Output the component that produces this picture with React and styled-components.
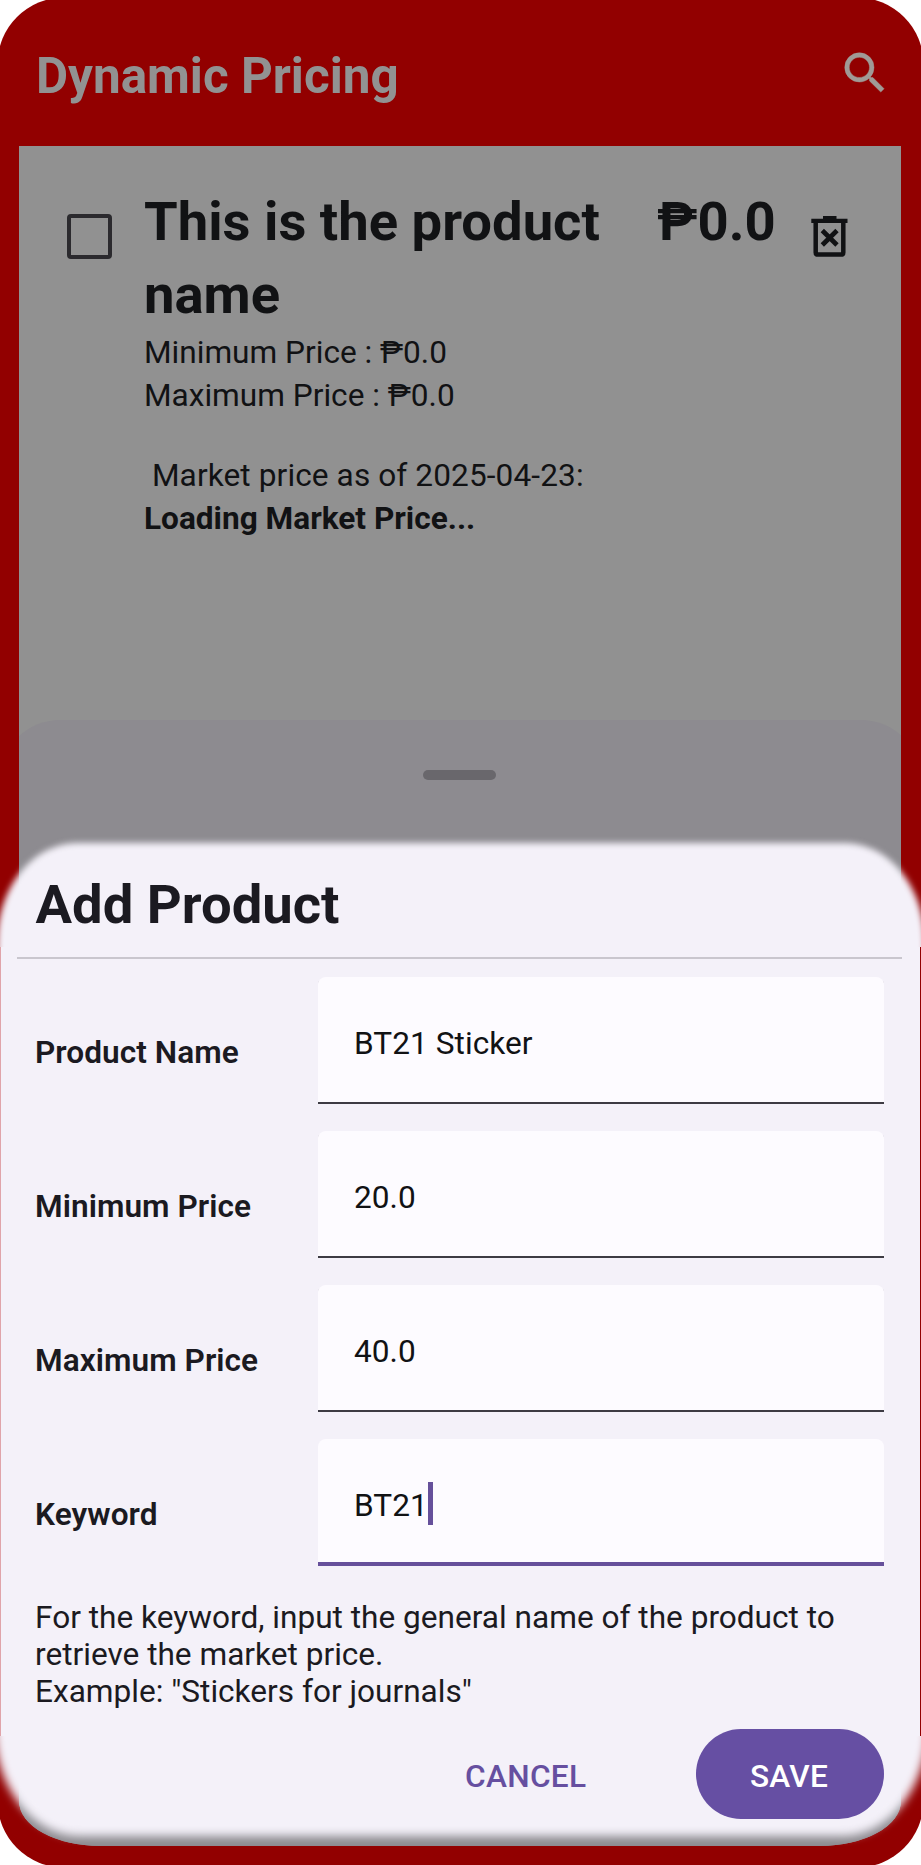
import React from "react";
import styled, { createGlobalStyle } from "styled-components";

const GlobalStyle = createGlobalStyle`
  * { box-sizing: border-box; }
  html, body { margin: 0; padding: 0; background: #ffffff; overflow: hidden; }
`;

const Screen = styled.div`
  position: relative;
  width: 921px;
  height: 1865px;
  padding: 0 20px 19px 19px;
  display: flex;
  flex-direction: column;
  overflow: hidden;
  background: #920000;
  clip-path: inset(-2.5px round 66.5px);
  font-family: Roboto, "Liberation Sans", sans-serif;
  font-size: 31.6px;
  line-height: 43px;
  letter-spacing: 0.05px;
  color: #111214;
`;

const AppBar = styled.header`
  flex: none;
  height: 146px;
  padding: 46px 9px 0 17px;
  display: flex;
  justify-content: space-between;
  align-items: flex-start;
`;

const AppTitle = styled.h1`
  margin: 0;
  font-size: 49.4px;
  line-height: 60px;
  font-weight: 700;
  letter-spacing: 0;
  color: #929292;
`;

const SearchIcon = styled.svg`
  width: 54px;
  height: 54px;
  fill: #a09a96;
  stroke: #a09a96;
  stroke-width: 0.2;
`;

const Card = styled.main`
  flex: 1;
  display: flex;
  flex-direction: column;
  justify-content: space-between;
  overflow: hidden;
  background: #919191;
  border-radius: 0 0 81px 81px / 0 0 45px 45px;
`;

const ProductRow = styled.section`
  display: flex;
  align-items: flex-start;
  padding: 39px 0 0 48px;
`;

const Checkbox = styled.div`
  flex: none;
  width: 45px;
  height: 45px;
  margin: 29px 32px 0 0;
  border: 4px solid #2b2a2e;
  border-radius: 4px;
`;

const ProductInfo = styled.div`
  flex: none;
  width: 513px;
`;

const ProductName = styled.h2`
  margin: 0;
  max-width: 470px;
  font-size: 54.4px;
  line-height: 73px;
  font-weight: 700;
  letter-spacing: 0;
`;

const Price = styled(ProductName)`
  width: 154px;
`;

const Line = styled.div`
  white-space: pre;
  font-weight: ${(p) => (p.$bold ? 700 : 400)};
  letter-spacing: ${(p) => (p.$spaced ? "0.1px" : "0")};
  margin-top: ${(p) => (p.$spaced ? "37px" : "0")};
`;

const TrashIcon = styled.svg`
  width: 37px;
  height: 41px;
  margin-top: 31px;
`;

const BackSheet = styled.div`
  height: 1126px;
  margin: 0 -20px 0 -19px;
  padding-top: 50px;
  background: #8d8b90;
  border-radius: 60px 60px 0 0;
`;

const Handle = styled.div`
  width: 73px;
  height: 10px;
  margin: 0 auto;
  border-radius: 5px;
  background: #69676c;
  transform: translateX(-1px);
`;

const Sheet = styled.section`
  position: absolute;
  left: 0;
  top: 843px;
  width: 921px;
  height: 1003px;
  padding-top: 30px;
  overflow: visible;
  color: #1b1a21;
`;

const SheetShade = styled.div`
  position: absolute;
  inset: -20px 0 0;
  overflow: hidden;

  &::before,
  &::after {
    content: "";
    position: absolute;
    background: #f4f1f9;
  }
  &::before {
    left: -3px;
    right: -4px;
    top: 20px;
    height: 700px;
    border-radius: 80px 80px 0 0 / 100px 100px 0 0;
    filter: blur(3px);
  }
  &::after {
    left: -6px;
    right: -7px;
    bottom: 10px;
    height: 500px;
    border-radius: 0 0 86px 86px / 0 0 110px 110px;
    filter: blur(5px);
  }
`;

const SheetTitle = styled.h2`
  position: relative;
  margin: 0;
  padding-left: 35.5px;
  font-size: 54.4px;
  line-height: 64px;
  font-weight: 700;
  letter-spacing: 0;
`;

const SheetBody = styled.div`
  position: relative;
  margin-top: 10px;
  height: 789px;
  padding-top: 10px;
  background: #f4f1f9;
  border-left: 1px solid #e0a4aa;
  border-right: 1px solid #920000;
`;

const Divider = styled.div`
  height: 2px;
  margin: 0 18px 18px 16px;
  background: #c9c6ce;
`;

const Fields = styled.div`
  display: flex;
  flex-direction: column;
  gap: 27px;
  padding: 0 36px 0 34px;
`;

const Field = styled.label`
  display: flex;
  height: 127px;
`;

const FieldLabel = styled.span`
  width: 283px;
  padding-top: 54px;
  font-weight: 560;
`;

const FieldBox = styled.span`
  flex: 1;
  display: flex;
  padding: 45px 0 0 36px;
  color: #111214;
  background: #fdfbff;
  border-radius: 8px 8px 0 0;
  box-shadow: inset 0 ${(p) => (p.$active ? "-4px #66509b" : "-2px #3d3b43")};
`;

const Caret = styled.span`
  width: 5px;
  height: 43px;
  margin: -2px 0 0 0;
  background: #66509b;
`;

const Helper = styled.p`
  margin: 33px 0 0;
  padding-left: 34px;
  line-height: 37px;
  letter-spacing: 0;
  white-space: pre-line;
`;

const Actions = styled.div`
  position: relative;
  display: flex;
  justify-content: flex-end;
  margin-top: -7px;
  padding-right: 37px;
`;

const Button = styled.button`
  width: ${(p) => (p.$filled ? "188px" : "231px")};
  height: 90px;
  padding: ${(p) => (p.$filled ? "4px 2px 0 0" : "4px 0 0")};
  text-align: ${(p) => (p.$filled ? "center" : "left")};
  border: 0;
  border-radius: 45px;
  font: inherit;
  font-weight: 500;
  letter-spacing: 0.3px;
  color: ${(p) => (p.$filled ? "#ffffff" : "#664fa0")};
  background: ${(p) => (p.$filled ? "#664fa3" : "transparent")};
`;

const fields = [
  { label: "Product Name", value: "BT21 Sticker" },
  { label: "Minimum Price", value: "20.0" },
  { label: "Maximum Price", value: "40.0" },
  { label: "Keyword", value: "BT21", active: true },
];

export default function App() {
  return (
    <>
      <GlobalStyle />
      <Screen>
        <AppBar>
          <AppTitle>Dynamic Pricing</AppTitle>
          <SearchIcon viewBox="0 0 24 24">
            <path d="M15.5 14h-.79l-.28-.27A6.471 6.471 0 0 0 16 9.5 6.5 6.5 0 1 0 9.5 16c1.61 0 3.09-.59 4.23-1.57l.27.28v.79l5 4.99L20.49 19l-4.99-5zm-6 0C7.01 14 5 11.99 5 9.5S7.01 5 9.5 5 14 7.01 14 9.5 11.99 14 9.5 14z" />
          </SearchIcon>
        </AppBar>
        <Card>
          <ProductRow>
            <Checkbox />
            <ProductInfo>
              <ProductName>This is the product name</ProductName>
              <Line>Minimum Price : ₱0.0</Line>
              <Line>Maximum Price : ₱0.0</Line>
              <Line $spaced> Market price as of 2025-04-23:</Line>
              <Line $bold>Loading Market Price...</Line>
            </ProductInfo>
            <Price>₱0.0</Price>
            <TrashIcon viewBox="0 0 37 41" fill="none" stroke="#111214">
              <path d="M0.3 4.8H36.5" strokeWidth="4.2" />
              <path d="M12 2H25.5" strokeWidth="4" />
              <path d="M4.7 5V36.5Q4.7 38.6 7 38.6H30Q32.3 38.6 32.3 36.5V5" strokeWidth="4.5" />
              <path d="M11.3 14.5L26 29M26 14.5L11.3 29" strokeWidth="4.7" />
            </TrashIcon>
          </ProductRow>
          <BackSheet>
            <Handle />
          </BackSheet>
        </Card>
        <Sheet>
          <SheetShade />
          <SheetTitle>Add Product</SheetTitle>
          <SheetBody>
            <Divider />
            <Fields>
              {fields.map((f) => (
                <Field key={f.label}>
                  <FieldLabel>{f.label}</FieldLabel>
                  <FieldBox $active={f.active}>
                    {f.value}
                    {f.active && <Caret />}
                  </FieldBox>
                </Field>
              ))}
            </Fields>
            <Helper>
              {"For the keyword, input the general name of the product to\nretrieve the market price.\nExample: \"Stickers for journals\""}
            </Helper>
          </SheetBody>
          <Actions>
            <Button>CANCEL</Button>
            <Button $filled>SAVE</Button>
          </Actions>
        </Sheet>
      </Screen>
    </>
  );
}
